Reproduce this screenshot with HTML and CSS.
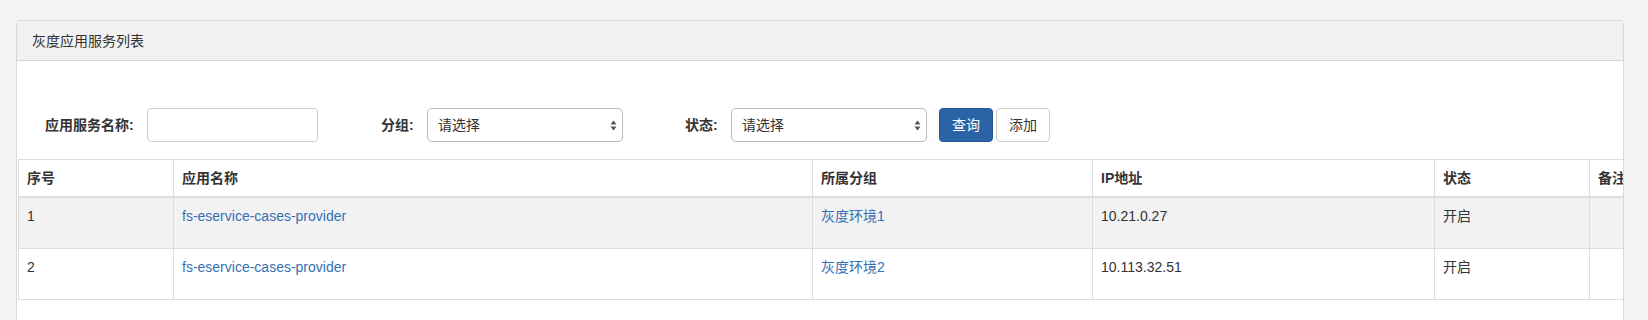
FILE: index.html
```html
<!DOCTYPE html>
<html lang="zh-CN">
<head>
    <meta charset="UTF-8">
    <title>灰度应用服务列表</title>
    <link rel="stylesheet" href="styles.css">
</head>
<body>
    <div class="page">
        <div class="panel">
            <div class="panel-heading">灰度应用服务列表</div>
            <div class="panel-body">
                <form class="filter-row">
                    <label class="filter-label label-name">应用服务名称:</label>
                    <input class="text-input" type="text">
                    <label class="filter-label label-group">分组:</label>
                    <div class="fake-select">
                        <span>请选择</span>
                        <svg width="7" height="11" viewBox="0 0 7 11"><path d="M3.5 0.5 L6.5 4.5 L0.5 4.5 Z M3.5 10.5 L6.5 6.5 L0.5 6.5 Z" fill="#555"/></svg>
                    </div>
                    <label class="filter-label label-state">状态:</label>
                    <div class="fake-select">
                        <span>请选择</span>
                        <svg width="7" height="11" viewBox="0 0 7 11"><path d="M3.5 0.5 L6.5 4.5 L0.5 4.5 Z M3.5 10.5 L6.5 6.5 L0.5 6.5 Z" fill="#555"/></svg>
                    </div>
                    <button type="button" class="btn btn-primary">查询</button>
                    <button type="button" class="btn btn-default">添加</button>
                </form>
                <div class="table-wrap">
                    <table class="service-table">
                        <colgroup>
                            <col class="col-idx">
                            <col class="col-name">
                            <col class="col-group">
                            <col class="col-ip">
                            <col class="col-state">
                            <col class="col-remark">
                        </colgroup>
                        <thead>
                            <tr>
                                <th>序号</th>
                                <th>应用名称</th>
                                <th>所属分组</th>
                                <th>IP地址</th>
                                <th>状态</th>
                                <th>备注</th>
                            </tr>
                        </thead>
                        <tbody>
                            <tr class="striped">
                                <td>1</td>
                                <td><a href="#">fs-eservice-cases-provider</a></td>
                                <td><a href="#">灰度环境1</a></td>
                                <td>10.21.0.27</td>
                                <td>开启</td>
                                <td></td>
                            </tr>
                            <tr>
                                <td>2</td>
                                <td><a href="#">fs-eservice-cases-provider</a></td>
                                <td><a href="#">灰度环境2</a></td>
                                <td>10.113.32.51</td>
                                <td>开启</td>
                                <td></td>
                            </tr>
                        </tbody>
                    </table>
                </div>
            </div>
        </div>
    </div>
</body>
</html>
```

FILE: styles.css
```css
body {
    margin: 0;
    background-color: #f4f4f4;
    font-family: "Liberation Sans", "Noto Sans CJK SC", sans-serif;
    font-size: 14px;
    line-height: 20px;
    color: #333;
    overflow: hidden;
}
.page {
    padding: 20px 24px 0 16px;
}
.panel {
    background-color: #fff;
    border: 1px solid #d9d9d9;
    border-radius: 4px;
    min-height: 320px;
    overflow: hidden;
}
.panel-heading {
    background-color: #f1f1f1;
    border-bottom: 1px solid #d6d6d6;
    padding: 10px 15px 9px;
}
.panel-body {
    padding-top: 47px;
}
.filter-row {
    display: flex;
    align-items: center;
    margin: 0 0 17px 0;
    padding-left: 28px;
    height: 34px;
}
.filter-label {
    font-weight: bold;
    margin-right: 12px;
}
.label-name {
    width: 90px;
}
.label-group {
    width: 34px;
    margin-left: 63px;
}
.label-state {
    width: 34px;
    margin-left: 50px;
}
.text-input {
    box-sizing: border-box;
    width: 171px;
    height: 34px;
    border: 1px solid #ccc;
    border-radius: 4px;
    margin: 0;
    padding: 6px 10px;
}
.fake-select {
    box-sizing: border-box;
    width: 196px;
    height: 34px;
    border: 1px solid #b9b9b9;
    border-radius: 5px;
    display: flex;
    align-items: center;
    justify-content: space-between;
    padding: 0 5px 0 10px;
    margin-right: 12px;
}
.fake-select svg {
    display: block;
}
.btn {
    box-sizing: border-box;
    height: 34px;
    padding: 6px 12px;
    border-radius: 4px;
    font-family: inherit;
    font-size: 14px;
    line-height: 20px;
    margin: 0;
}
.btn-primary {
    background-color: #2a63a6;
    border: 1px solid #245895;
    color: #fff;
    margin-right: 3px;
}
.btn-default {
    background-color: #fff;
    border: 1px solid #ccc;
    color: #333;
}
.table-wrap {
    overflow: hidden;
    padding-left: 1px;
}
.service-table {
    border-collapse: collapse;
    table-layout: fixed;
    width: 1771px;
}
.col-idx { width: 155px; }
.col-name { width: 639px; }
.col-group { width: 280px; }
.col-ip { width: 342px; }
.col-state { width: 155px; }
.col-remark { width: 200px; }
.service-table th,
.service-table td {
    border: 1px solid #ddd;
    padding: 8px;
    text-align: left;
    vertical-align: top;
}
.service-table th {
    font-weight: bold;
    border-bottom: 2px solid #ddd;
}
.service-table td {
    padding-bottom: 22px;
}
.striped td {
    background-color: #f2f2f2;
}
.service-table a {
    color: #3370b5;
    text-decoration: none;
}
```
